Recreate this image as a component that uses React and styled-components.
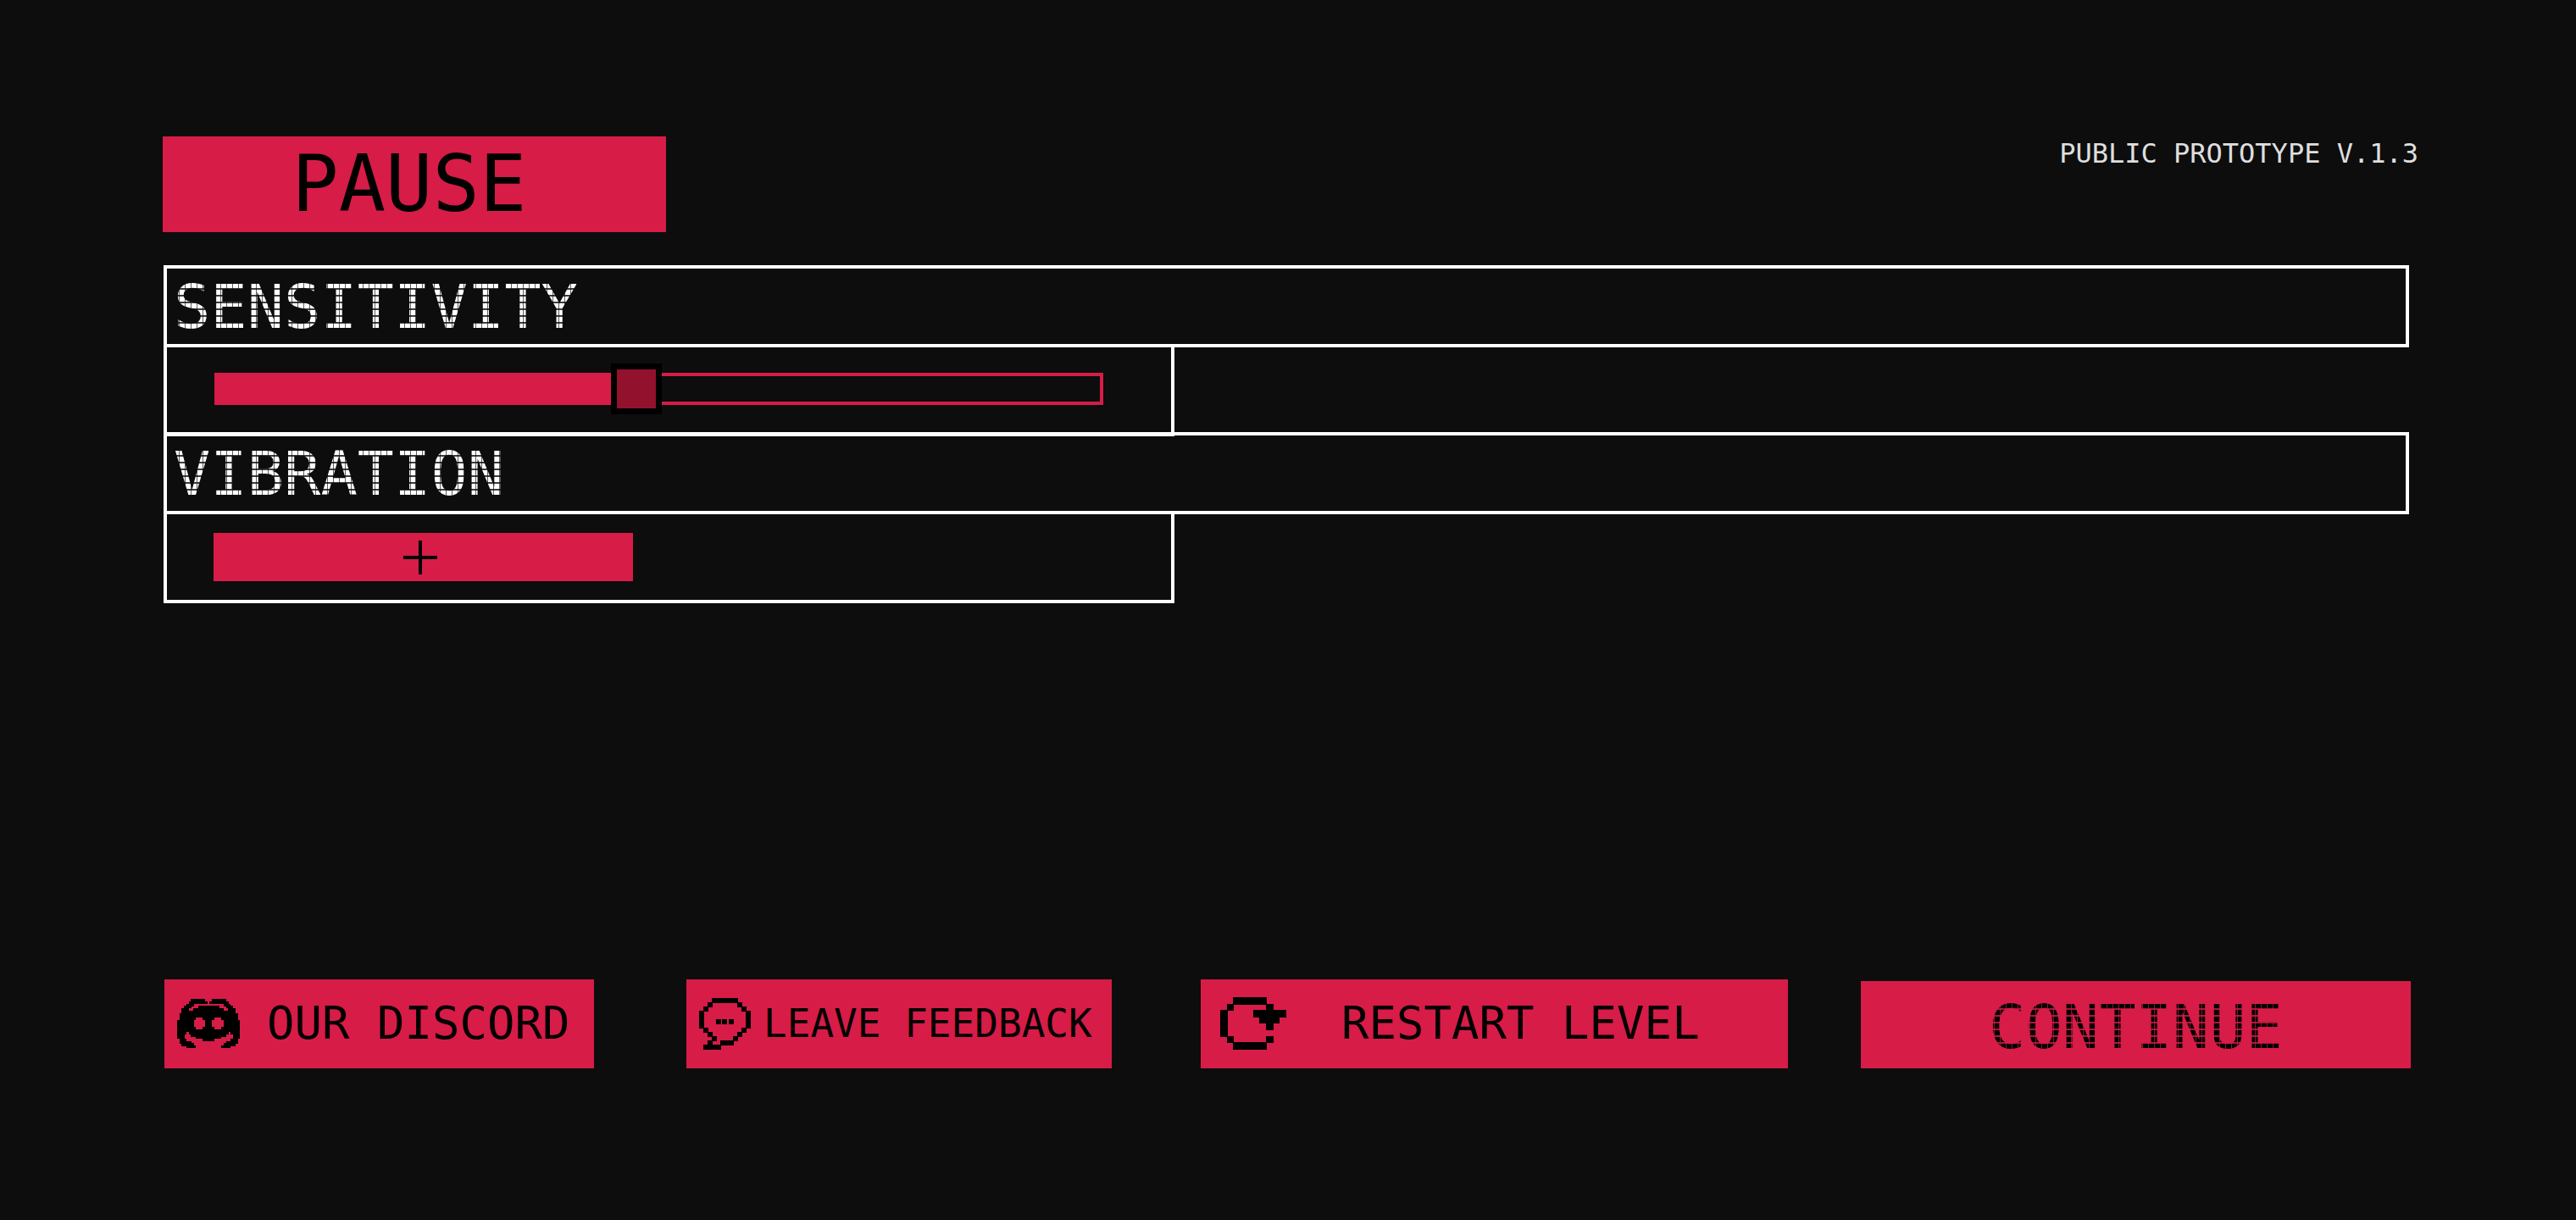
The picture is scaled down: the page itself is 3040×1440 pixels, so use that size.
import React, { useState } from "react";
import styled, { createGlobalStyle, css } from "styled-components";

const ink = "#0d0d0d";
const red = "#d61c47";
const darkRed = "#92122e";
const mono = `"DejaVu Sans Mono", "Liberation Mono", monospace`;

const GlobalStyle = createGlobalStyle`
  *, *::before, *::after { box-sizing: border-box; }
  body { margin: 0; background: ${ink}; color: #fff; font-family: ${mono}; }
`;

/* LED-matrix look: hairline gaps cut through the glyphs */
const dotMatrix = css`
  mask-image: repeating-linear-gradient(to right, #000 0 6px, rgba(0, 0, 0, 0.35) 6px 7px),
    repeating-linear-gradient(to bottom, #000 0 6px, rgba(0, 0, 0, 0.2) 6px 8px);
  mask-composite: intersect;
`;

const Screen = styled.main`
  display: flex;
  flex-direction: column;
  min-height: 100vh;
  padding: 161px 0 179px;
`;

const Header = styled.header`
  display: flex;
  justify-content: space-between;
  align-items: flex-start;
  padding: 0 186px 0 192px;
`;

const Title = styled.h1`
  display: flex;
  align-items: center;
  justify-content: center;
  width: 22.3%;
  height: 113px;
  margin: 0;
  padding-right: 12px;
  background: ${red};
  color: #000;
  font-size: 92px;
  font-weight: 400;
  line-height: 108px;
  white-space: nowrap;
`;

const Version = styled.p`
  margin: 0;
  color: #dedede;
  font-size: 32px;
  line-height: 40px;
  white-space: nowrap;
`;

const Settings = styled.section`
  margin-top: 39px;
  padding: 0 197px 0 193px;
`;

const Setting = styled.div`
  & + & {
    margin-top: -5px;
  }
`;

const SettingName = styled.h2`
  display: flex;
  align-items: center;
  height: 97px;
  margin: 0;
  padding: 0 8px;
  border: 4px solid #fff;
  font-size: 72px;
  font-weight: 400;
  line-height: 88px;
`;

const Dots = styled.span`
  ${dotMatrix}
`;

const SettingBody = styled.div`
  display: flex;
  align-items: center;
  width: 45%;
  height: 109px;
  margin-top: -4px;
  padding: ${(p) => (p.$slider ? "0 80px 3px 56px" : "0 80px 0 55px")};
  border: 4px solid #fff;
`;

const thumb = css`
  appearance: none;
  box-sizing: border-box;
  width: 60px;
  height: 60px;
  border: 7px solid #000;
  border-radius: 0;
  background: ${darkRed};
`;

const Slider = styled.input`
  appearance: none;
  flex: 1;
  min-width: 0;
  height: 38px;
  margin: 0;
  border: 4px solid ${red};
  background: linear-gradient(${red}, ${red}) no-repeat 0 0 / var(--fill) 100%;
  cursor: pointer;

  &::-webkit-slider-runnable-track {
    height: 30px;
  }
  &::-webkit-slider-thumb {
    ${thumb}
    margin-top: -15px;
  }
  &::-moz-range-thumb {
    ${thumb}
  }
`;

const Toggle = styled.button`
  display: flex;
  align-items: center;
  justify-content: center;
  width: 47.2%;
  height: 57px;
  padding: 0 8px 0 0;
  border: 0;
  background: ${red};
  color: #000;
  cursor: pointer;
`;

const Footer = styled.footer`
  display: grid;
  grid-template-columns:
    minmax(0, 507fr) 109fr minmax(0, 502fr) 105fr
    minmax(0, 693fr) 86fr minmax(0, 649fr);
  align-items: end;
  margin-top: auto;
  padding: 0 195px 0 194px;

  & > :nth-child(2) { grid-column: 3; }
  & > :nth-child(3) { grid-column: 5; }
  & > :nth-child(4) { grid-column: 7; }
`;

const Action = styled.button`
  display: flex;
  align-items: center;
  justify-content: ${(p) => (p.$center ? "center" : "flex-start")};
  gap: ${(p) => p.$gap || 0}px;
  height: ${(p) => (p.$center ? 103 : 105)}px;
  padding: ${(p) => (p.$center ? "4px 0 0" : `0 0 2px ${p.$inset}px`)};
  border: 0;
  background: ${red};
  color: #000;
  font-family: ${mono};
  font-size: ${(p) => p.$size}px;
  line-height: 1;
  text-decoration: none;
  white-space: nowrap;
  cursor: pointer;
`;

const Art = styled.svg`
  display: block;
  flex: none;
  overflow: visible;
  fill: #000;
  shape-rendering: crispEdges;
`;

/* Each entry is [row, firstColumn, lastColumn] */
const discordRuns = [
  [0, 6, 11], [0, 15, 20],
  [1, 5, 12], [1, 14, 21],
  [2, 4, 6], [2, 20, 22],
  [3, 3, 5], [3, 9, 17], [3, 21, 23],
  [4, 2, 4], [4, 7, 19], [4, 22, 24],
  [5, 2, 24],
  [6, 1, 25],
  [7, 1, 25],
  [8, 1, 7], [8, 11, 15], [8, 19, 25],
  [9, 0, 6], [9, 12, 14], [9, 20, 26],
  [10, 0, 6], [10, 12, 14], [10, 20, 26],
  [11, 0, 6], [11, 12, 14], [11, 20, 26],
  [12, 0, 7], [12, 11, 15], [12, 19, 26],
  [13, 0, 26],
  [14, 0, 3], [14, 5, 21], [14, 23, 26],
  [15, 0, 2], [15, 6, 20], [15, 24, 26],
  [16, 0, 2], [16, 8, 18], [16, 24, 26],
  [17, 1, 3], [17, 11, 15], [17, 23, 25],
  [18, 1, 5], [18, 21, 25],
  [19, 2, 6], [19, 20, 24],
  [20, 4, 7], [20, 19, 22],
];

const bubbleRuns = [
  [0, 3, 8],
  [1, 2, 2], [1, 9, 9],
  [2, 1, 1], [2, 10, 10],
  [3, 0, 0], [3, 11, 11],
  [4, 0, 0], [4, 11, 11],
  [5, 0, 0], [5, 11, 11],
  [6, 0, 0], [6, 11, 11],
  [7, 1, 1], [7, 10, 10],
  [8, 2, 2], [8, 9, 9],
  [9, 3, 3], [9, 8, 8],
  [10, 2, 2], [10, 5, 7],
  [11, 1, 4],
  [5, 4, 4], [5, 5.4, 5.4], [5, 7, 7],
];

const restartRuns = [
  [0, 2, 6],
  [1, 1, 1], [1, 7, 7],
  [2, 0, 0], [2, 5, 9],
  [3, 0, 0], [3, 6, 8],
  [4, 0, 0], [4, 7, 7],
  [5, 0, 0],
  [6, 1, 1], [6, 7, 7],
  [7, 2, 6],
];

/* Cells overlap slightly so that diagonal neighbours touch */
const bleed = 0.12;

function PixelArt({ runs, cols, rows, width, height }) {
  return (
    <Art
      width={width}
      height={height}
      viewBox={`0 0 ${cols} ${rows}`}
      preserveAspectRatio="none"
      aria-hidden="true"
    >
      {runs.map(([row, from, to]) => (
        <rect
          key={`${row}-${from}`}
          x={from}
          y={row}
          width={to - from + 1 + bleed}
          height={1 + bleed}
        />
      ))}
    </Art>
  );
}

export default function App() {
  const [sensitivity, setSensitivity] = useState(47.3);
  const [vibration, setVibration] = useState(true);

  return (
    <>
      <GlobalStyle />
      <Screen>
        <Header>
          <Title>PAUSE</Title>
          <Version>PUBLIC PROTOTYPE V.1.3</Version>
        </Header>

        <Settings>
          <Setting>
            <SettingName>
              <Dots as="label" htmlFor="sensitivity">SENSITIVITY</Dots>
            </SettingName>
            <SettingBody $slider>
              <Slider
                id="sensitivity"
                type="range"
                min="0"
                max="100"
                step="0.1"
                value={sensitivity}
                onChange={(e) => setSensitivity(Number(e.target.value))}
                style={{ "--fill": `${sensitivity}%` }}
              />
            </SettingBody>
          </Setting>
          <Setting>
            <SettingName>
              <Dots id="vibration-name">VIBRATION</Dots>
            </SettingName>
            <SettingBody>
              <Toggle
                type="button"
                aria-labelledby="vibration-name"
                aria-pressed={vibration}
                onClick={() => setVibration(!vibration)}
              >
                <Art width="40" height="40" viewBox="0 0 40 40" aria-hidden="true">
                  {vibration && <rect x="18" y="0" width="4" height="40" />}
                  <rect x="0" y="18" width="40" height="4" />
                </Art>
              </Toggle>
            </SettingBody>
          </Setting>
        </Settings>

        <Footer>
          <Action as="a" href="#discord" $inset={15} $gap={32} $size={54}>
            <PixelArt runs={discordRuns} cols={27} rows={21} width={74} height={58} />
            OUR DISCORD
          </Action>
          <Action as="a" href="#feedback" $inset={15} $gap={16} $size={46}>
            <PixelArt runs={bubbleRuns} cols={12} rows={12} width={60} height={60} />
            LEAVE FEEDBACK
          </Action>
          <Action type="button" $inset={23} $gap={66} $size={54}>
            <PixelArt runs={restartRuns} cols={10} rows={8} width={77} height={61} />
            RESTART LEVEL
          </Action>
          <Action type="button" $center $size={72}>
            <Dots>CONTINUE</Dots>
          </Action>
        </Footer>
      </Screen>
    </>
  );
}
